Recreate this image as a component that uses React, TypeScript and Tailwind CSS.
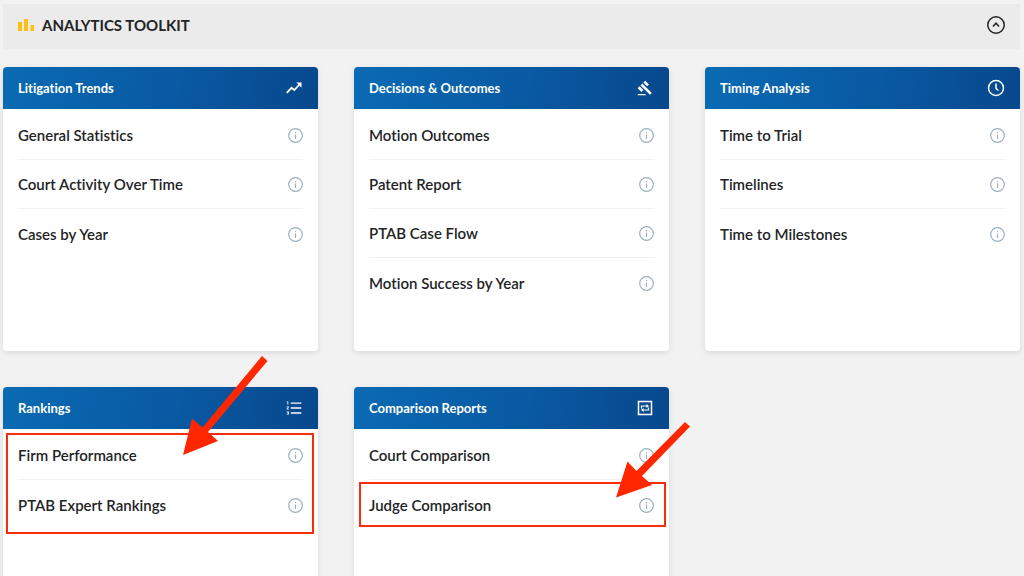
import type { ReactNode } from "react";
import { useState } from "react";
import { AiOutlineOrderedList } from "react-icons/ai";
import { MdGavel } from "react-icons/md";

interface ToolkitCard {
  title: string;
  icon: ReactNode;
  reports: string[];
  highlight?: ReactNode;
}

const cards: ToolkitCard[] = [
  {
    title: "Litigation Trends",
    icon: <TrendIcon />,
    reports: ["General Statistics", "Court Activity Over Time", "Cases by Year"],
  },
  {
    title: "Decisions & Outcomes",
    icon: <MdGavel aria-hidden="true" className="h-4 w-4" />,
    reports: ["Motion Outcomes", "Patent Report", "PTAB Case Flow", "Motion Success by Year"],
  },
  {
    title: "Timing Analysis",
    icon: <ClockIcon />,
    reports: ["Time to Trial", "Timelines", "Time to Milestones"],
  },
  {
    title: "Rankings",
    icon: <AiOutlineOrderedList aria-hidden="true" className="h-[18px] w-[18px]" />,
    reports: ["Firm Performance", "PTAB Expert Rankings"],
    highlight: (
      <>
        <div className="pointer-events-none absolute left-[3px] right-1 top-[46px] h-[101px] border-2 border-[#fb2c0c]" />
        <svg
          aria-hidden="true"
          className="pointer-events-none absolute right-[50px] top-[-32px] h-[101px] w-[85px]"
          viewBox="0 0 85 101"
          fill="#ff2600"
        >
          <path d="M0 100 9 63.500 19.500 72.500 79 1 84.500 6 25 77 35 86Z" />
        </svg>
      </>
    ),
  },
  {
    title: "Comparison Reports",
    icon: <CompareIcon />,
    reports: ["Court Comparison", "Judge Comparison"],
    highlight: (
      <>
        <div className="pointer-events-none absolute left-[5px] right-[3px] top-[95px] h-[45px] border-2 border-[#fb2c0c]" />
        <svg
          aria-hidden="true"
          className="pointer-events-none absolute right-[-21px] top-[35px] h-[76px] w-[74px]"
          viewBox="0 0 74 76"
          fill="#ff2600"
        >
          <path d="M0 75.500 11.500 39.500 20.500 49 69 0 74 4.500 26 54 36 63Z" />
        </svg>
      </>
    ),
  },
];

export default function App() {
  const [isOpen, setIsOpen] = useState(true);

  return (
    <main className="h-screen overflow-hidden bg-[#f2f2f2] pl-[3px] pr-1 pt-1 font-['Lato','Liberation_Sans',sans-serif] text-[#222426] [font-variant-ligatures:no-common-ligatures]">
      <header className="flex h-[45px] items-center justify-between bg-[#ebebeb] px-[15px] pb-[3px]">
        <h1 className="flex items-center gap-2 text-[15px] font-bold leading-5">
          <BarsIcon />
          ANALYTICS TOOLKIT
        </h1>
        <button
          aria-expanded={isOpen}
          aria-label="Toggle analytics toolkit"
          className="cursor-pointer"
          onClick={() => setIsOpen(!isOpen)}
          type="button"
        >
          <svg
            aria-hidden="true"
            className={`h-[18px] w-[18px] ${isOpen ? "" : "rotate-180"}`}
            viewBox="0 0 18 18"
            fill="none"
            stroke="currentColor"
            strokeWidth="1.500"
          >
            <circle cx="9" cy="9" r="8.250" />
            <path d="M6 10.500 9 7.200 12 10.500" />
          </svg>
        </button>
      </header>

      {isOpen ? (
        <div className="mt-[18px] grid grid-cols-3 gap-9">
          {cards.map((card) => (
            <Card key={card.title} {...card} />
          ))}
        </div>
      ) : null}
    </main>
  );
}

function Card({ title, icon, reports, highlight }: ToolkitCard) {
  return (
    <section className="relative min-h-[284px] rounded bg-white shadow-[0_2px_6px_rgba(0,0,0,0.1)]">
      <div className="flex h-[42px] items-center justify-between rounded-t bg-linear-[100deg,#0a6bb3,#0959a3_55%,#08488c] px-[15px] text-white">
        <h2 className="text-[13px] font-bold leading-5">{title}</h2>
        <span className="flex w-[18px] justify-center">{icon}</span>
      </div>
      <ul className="divide-y divide-[#f2f2f2] px-[15px] pt-0.5">
        {reports.map((report) => (
          <li key={report} className="flex h-[49px] items-center justify-between">
            <a className="text-[15px] font-semibold leading-5" href="#">
              {report}
            </a>
            <button aria-label={`About ${report}`} className="cursor-pointer" type="button">
              <InfoIcon />
            </button>
          </li>
        ))}
      </ul>
      {highlight}
    </section>
  );
}

function BarsIcon() {
  return (
    <svg aria-hidden="true" className="h-4 w-4" viewBox="0 0 16 16" fill="#fdc010">
      <path d="M0 5h4v9H0zM6 2h4v12H6zM12.500 8H16v6h-3.500z" />
    </svg>
  );
}

function TrendIcon() {
  return (
    <svg aria-hidden="true" className="h-[18px] w-[18px]" viewBox="0 0 18 18" fill="none" stroke="currentColor">
      <path d="M1.800 13.800 6.500 8.800 9.300 11 14.500 5.500" strokeWidth="1.800" />
      <path d="M11.300 3.500H16.500V8.700Z" fill="currentColor" stroke="none" />
    </svg>
  );
}

function InfoIcon() {
  return (
    <svg aria-hidden="true" className="h-4 w-[15px]" viewBox="0 0 15 16" fill="none" stroke="#9bb0bd">
      <circle cx="7.500" cy="8.500" r="6.800" strokeWidth="1.200" />
      <path d="M7.500 7.500v4.500M7.500 5v1.200" strokeWidth="1.200" />
    </svg>
  );
}

function ClockIcon() {
  return (
    <svg
      aria-hidden="true"
      className="h-[18px] w-[18px]"
      viewBox="0 0 18 18"
      fill="none"
      stroke="currentColor"
      strokeWidth="1.500"
    >
      <circle cx="9" cy="9" r="7.500" />
      <path d="M9 4.500V9.500L11.500 11.500" />
    </svg>
  );
}

function CompareIcon() {
  return (
    <svg aria-hidden="true" className="h-4 w-4" viewBox="0 0 16 16" fill="none" stroke="currentColor">
      <path d="M1.500 1.500h13v13h-13z" strokeWidth="1.500" />
      <path d="M4.500 8.500V6H10M11.500 7.500V10H6" strokeWidth="1.200" />
      <path d="M9.500 4 12 6 9.500 8ZM6.500 8 4 10 6.500 12Z" fill="currentColor" stroke="none" />
    </svg>
  );
}
